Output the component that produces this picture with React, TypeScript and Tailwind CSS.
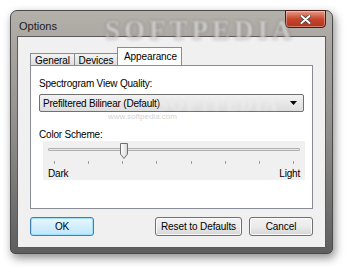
const font = { fontFamily: '"Segoe UI", "Liberation Sans", Arial, sans-serif' };
const serif = { fontFamily: '"Liberation Serif", serif' };

function Tab({ label, active }: { label: string; active?: boolean }) {
  if (active) {
    return (
      <div className="relative -mb-px flex h-[19px] w-[65px] items-center border border-b-0 border-[#898c95] bg-white px-[6px] pb-[2px] text-[10px] tracking-[-0.1px] text-black">
        {label}
      </div>
    );
  }
  return (
    <div className="mt-[6px] flex h-[12px] items-center justify-center border border-b-0 border-r-0 border-[#898c95] bg-gradient-to-b from-[#f3f3f3] to-[#dedede] pt-[1px] text-[10px] tracking-[-0.1px] text-black first:w-[44px] [&:nth-child(2)]:w-[43px]">
      {label}
    </div>
  );
}

function Thumb() {
  return (
    <svg width="10" height="16" viewBox="0 0 10 16" className="block">
      <defs>
        <linearGradient id="th" x1="0" x2="1" y1="0" y2="0">
          <stop offset="0" stopColor="#ffffff" />
          <stop offset="1" stopColor="#d6d6d6" />
        </linearGradient>
      </defs>
      <path d="M1.5 0.5 H8.5 V11 L5 15.5 L1.5 11 Z" fill="url(#th)" stroke="#6f6f6f" strokeLinejoin="round" />
    </svg>
  );
}

function Btn({ label, primary, w }: { label: string; primary?: boolean; w: string }) {
  return (
    <div
      className={
        'flex h-[19px] items-center justify-center rounded-[3px] border text-[10px] tracking-[-0.1px] text-black ' +
        w +
        (primary
          ? ' border-[#3c7fb1] bg-gradient-to-b from-[#eaf6fd] to-[#bee6fd] shadow-[inset_0_0_0_1px_#9fe0f9]'
          : ' border-[#707070] bg-gradient-to-b from-[#f2f2f2] via-[#ebebeb] to-[#d5d5d5] shadow-[inset_0_0_0_1px_#fbfbfb]')
      }
    >
      {label}
    </div>
  );
}

export default function App() {
  const ticks = [0, 1, 2, 3, 4, 5, 6, 7];
  return (
    <div className="h-[272px] w-[350px] overflow-hidden bg-white pl-[10px] pt-[10px]" style={font}>
      <div className="relative flex h-[244px] w-[323px] flex-col rounded-t-[7px] rounded-b-[5px] border border-[#4a4a4a] bg-gradient-to-b from-[#b4b0aa] via-[#8f8e8c] to-[#5e5e5e] px-[6px] pb-[5px] shadow-[2px_4px_10px_rgba(0,0,0,0.45)]">
        {/* title bar */}
        <div className="relative flex h-[25px] items-start justify-between">
          <span className="pl-[2px] pt-[7px] text-[11px] text-[#1b1b1b]">Options</span>
          <span
            className="pointer-events-none absolute left-[88px] top-[-1px] text-[27px] font-bold tracking-[4px] text-[#d9d9d9] opacity-70 blur-[1.2px] [text-shadow:0_0_3px_#555]"
            style={serif}
          >
            SOFTPEDIA
          </span>
          <div className="-mt-px flex h-[18px] w-[41px] items-center justify-center rounded-b-[4px] border border-[#4f1a12] bg-gradient-to-b from-[#e09b8a] via-[#c8452c] to-[#b1361f] shadow-[inset_0_0_0_1px_rgba(255,255,255,0.35)]">
            <svg width="11" height="9" viewBox="0 0 11 9">
              <path d="M1.5 1 L9.5 8 M9.5 1 L1.5 8" stroke="#3a3a3a" strokeWidth="3.4" strokeLinecap="round" />
              <path d="M1.5 1 L9.5 8 M9.5 1 L1.5 8" stroke="#ffffff" strokeWidth="2" strokeLinecap="round" />
            </svg>
          </div>
        </div>
        {/* client */}
        <div className="flex flex-1 flex-col border border-[#5a5a5a] bg-[#f0f0f0] px-[12px] pt-[10px]">
          <div className="flex items-end">
            <Tab label="General" />
            <Tab label="Devices" />
            <Tab label="Appearance" active />
          </div>
          <div className="relative flex h-[144px] flex-col border border-[#898c95] bg-white px-[8px] pt-[11px]">
            <div className="text-[10px] leading-[13px] tracking-[-0.2px] text-black">Spectrogram View Quality:</div>
            <div className="relative mt-[4px] flex h-[18px] items-center justify-between rounded-[2px] border border-[#707070] bg-gradient-to-b from-[#f2f2f2] to-[#dddddd] pl-[3px] pr-[6px] text-[10px] tracking-[-0.2px] text-black">
              <span>Prefiltered Bilinear (Default)</span>
              <svg width="7" height="4" viewBox="0 0 7 4">
                <path d="M0 0 H7 L3.5 4 Z" fill="#000" />
              </svg>
              <span
                className="pointer-events-none absolute left-[118px] top-[-4px] text-[18px] font-bold tracking-[2px] text-[#ececec] opacity-80 blur-[0.8px]"
                style={serif}
              >
                SOFTPEDIA
              </span>
            </div>
            <span className="pointer-events-none absolute left-[77px] top-[47px] text-[8px] leading-[8px] text-[#d4d4d4]">
              www.softpedia.com
            </span>
            <div className="mt-[16px] text-[10px] leading-[13px] tracking-[-0.2px] text-black">Color Scheme:</div>
            <div className="ml-[4px] flex h-[39px] w-[262px] flex-col bg-[#f0f0f0] px-[5px]">
              <div className="relative mt-[7px] h-[3px] rounded-[1px] border border-[#b0b0b0] bg-[#e7e7e7]">
                <div className="absolute left-[70px] top-[-6px]">
                  <Thumb />
                </div>
              </div>
              <div className="mt-[10px] flex justify-between px-[6px]">
                {ticks.map((t) => (
                  <div key={t} className="h-[3px] w-px bg-[#a0a0a0]" />
                ))}
              </div>
              <div className="mt-[4px] flex justify-between text-[10px] leading-[12px] tracking-[-0.2px] text-black">
                <span>Dark</span>
                <span>Light</span>
              </div>
            </div>
          </div>
          <div className="mt-[8px] flex items-center">
            <Btn label="OK" primary w="w-[64px]" />
            <div className="flex-1" />
            <Btn label="Reset to Defaults" w="w-[87px]" />
            <div className="w-[7px]" />
            <Btn label="Cancel" w="w-[64px]" />
          </div>
        </div>
      </div>
    </div>
  );
}
